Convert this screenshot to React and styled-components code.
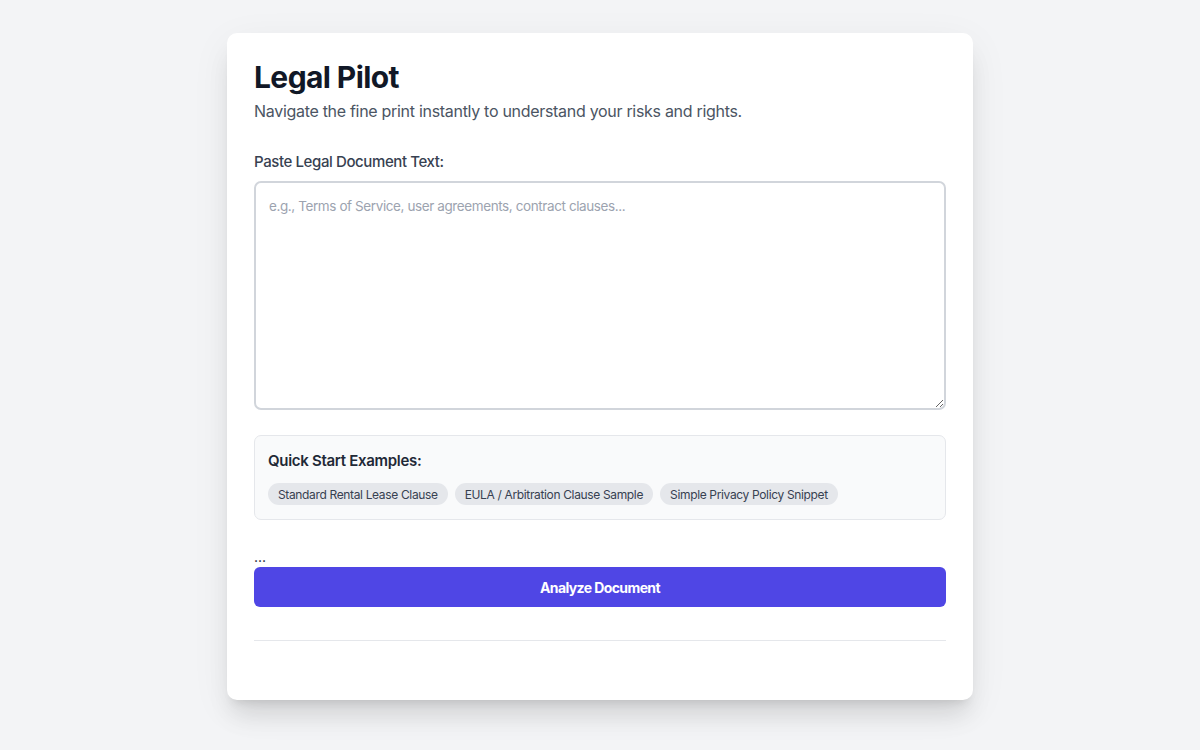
import React from "react";
import styled, { createGlobalStyle } from "styled-components";

const Global = createGlobalStyle`
  * { box-sizing: border-box; }
  html, body { margin: 0; padding: 0; }
  body {
    background: #f3f4f6;
    font-family: Inter, "Noto Sans", "Liberation Sans", sans-serif;
    color: #111827;
  }
`;

const Page = styled.div`
  min-height: 750px;
  padding-top: 33px;
  display: flex;
  justify-content: center;
`;

const Card = styled.div`
  width: 746px;
  height: 667px;
  background: #ffffff;
  border-radius: 10px;
  padding: 26px 27px;
  box-shadow: 0 20px 25px -5px rgba(0,0,0,0.1), 0 8px 10px -6px rgba(0,0,0,0.1), 0 10px 40px rgba(0,0,0,0.06);
  display: flex;
  flex-direction: column;
`;

const Title = styled.h1`
  margin: 0;
  font-size: 30px;
  line-height: 36px;
  font-weight: 700;
  color: #111827;
  letter-spacing: -0.6px;
`;

const Subtitle = styled.p`
  margin: 3px 0 0;
  font-size: 16px;
  line-height: 26px;
  color: #4b5563;
  letter-spacing: -0.3px;
`;

const Label = styled.label`
  display: block;
  margin-top: 28px;
  font-size: 15px;
  line-height: 20px;
  font-weight: 500;
  color: #374151;
  letter-spacing: -0.4px;
`;

const TextArea = styled.textarea`
  display: block;
  margin-top: 9px;
  width: 100%;
  height: 229px;
  border: 2px solid #d1d5db;
  border-radius: 7px;
  padding: 13px 13px;
  font-family: Inter, "Noto Sans", "Liberation Sans", sans-serif;
  font-size: 13.5px;
  line-height: 20px;
  letter-spacing: -0.4px;
  color: #111827;
  resize: vertical;
  outline: none;
  &::placeholder { color: #9ca3af; }
`;

const Examples = styled.div`
  margin-top: 25px;
  background: #f9fafb;
  border: 1px solid #e5e7eb;
  border-radius: 7px;
  padding: 15px 13px 14px;
`;

const ExamplesTitle = styled.h3`
  margin: 0;
  font-size: 15px;
  line-height: 20px;
  font-weight: 600;
  color: #1f2937;
  letter-spacing: -0.3px;
`;

const Chips = styled.div`
  display: flex;
  gap: 7px;
  margin-top: 12px;
`;

const Chip = styled.button`
  border: none;
  background: #e5e7eb;
  color: #374151;
  border-radius: 999px;
  padding: 0 10px;
  height: 22px;
  font-family: Inter, "Noto Sans", "Liberation Sans", sans-serif;
  font-size: 12px;
  letter-spacing: -0.35px;
  cursor: pointer;
`;

const Dots = styled.div`
  margin-top: 27px;
  font-size: 14px;
  line-height: 20px;
  color: #111827;
  height: 20px;
  display: flex;
  align-items: flex-end;
`;

const Button = styled.button`
  width: 100%;
  height: 40px;
  border: none;
  border-radius: 6px;
  background: #4f46e5;
  color: #fff;
  font-family: Inter, "Noto Sans", "Liberation Sans", sans-serif;
  font-weight: 700;
  font-size: 14px;
  letter-spacing: -0.6px;
  cursor: pointer;
`;

const Divider = styled.hr`
  margin: 33px 0 0;
  border: none;
  border-top: 1px solid #e5e7eb;
`;

export default function App() {
  return (
    <>
      <Global />
      <Page>
        <Card>
          <Title>Legal Pilot</Title>
          <Subtitle>Navigate the fine print instantly to understand your risks and rights.</Subtitle>
          <Label>Paste Legal Document Text:</Label>
          <TextArea placeholder="e.g., Terms of Service, user agreements, contract clauses..." />
          <Examples>
            <ExamplesTitle>Quick Start Examples:</ExamplesTitle>
            <Chips>
              <Chip>Standard Rental Lease Clause</Chip>
              <Chip>EULA / Arbitration Clause Sample</Chip>
              <Chip>Simple Privacy Policy Snippet</Chip>
            </Chips>
          </Examples>
          <Dots>...</Dots>
          <Button>Analyze Document</Button>
          <Divider />
        </Card>
      </Page>
    </>
  );
}
